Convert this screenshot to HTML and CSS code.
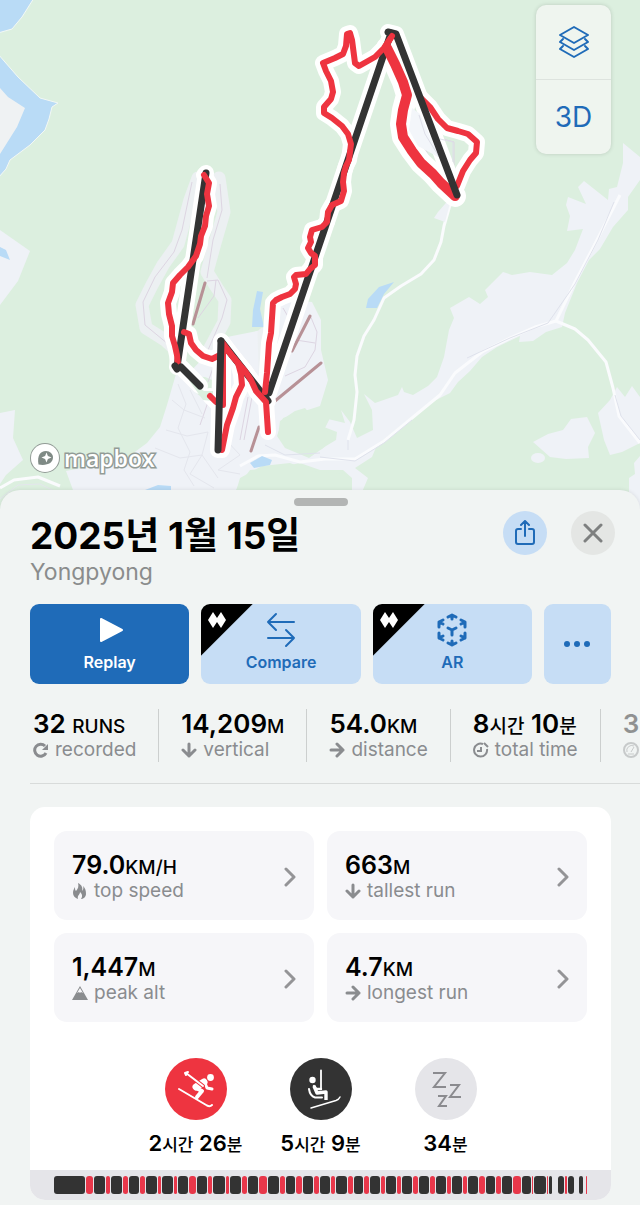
FILE: index.html
```html
<!DOCTYPE html>
<html lang="ko">
<head>
    <meta charset="UTF-8">
    <meta name="viewport" content="width=device-width, initial-scale=1.0">
    <title>Yongpyong</title>
    <link rel="stylesheet" href="styles.css">
</head>
<body>

    <div class="map">
        <svg class="map-canvas" viewBox="0 0 640 512" preserveAspectRatio="xMidYMin slice" aria-hidden="true">
            <defs>
                <g id="lifts">
                    <path d="M206 173L177 367M181 367L200 386M221 341L218 450M221 341L268 401M391 33L269 393M388 32L396 34L457 195"/>
                </g>
                <g id="runs">
                    <path d="M204 175L209 183L207 194L209 206L206 216L205 226L201 236L200 244L196 256L188 267L180 275L173 283L172 292L168 303L169 314L172 326L172 336L175 346L177 355L178 365"/>
                    <path d="M184 332L189 334L191 343L196 350L203 356L212 359L220 355"/>
                    <path d="M222 342L233 357L245 371L251 380L256 391L266 402L268 432"/>
                    <path d="M224 346L238 363L241 374L242 385L236 397L233 408L227 425L222 450"/>
                    <path d="M223 350L223 405M210 396L216 402"/>
                    <path d="M265 392L267 373L268 358L269 343L271 333L272 318L273 303L276 300L282 297L290 294L295 289L296 284L294 277L296 275L306 274L310 269L315 265L315 256L311 253L308 248L311 242L310 237L312 230L322 227L327 222L328 212L332 205L341 201L344 191L343 182L344 173L346 166L349 160L351 144L348 134L342 126L332 118L324 113L324 107L331 99L333 92L331 81L326 71L323 63L335 58L343 54L346 46L347 34L350 33L352 40L355 63L359 66L375 57L384 48L392 36"/>
                    <path d="M420 97L430 107L438 119L447 128L458 131L468 134L477 142L476 153L470 160L463 171L457 186"/>
                </g>
                <path id="wide-run" d="M387 48L395 64L403 82L407 95L403 110L401 124L403 137L412 151L421 163L433 174L441 183L455 196"/>
            </defs>

            <rect width="640" height="512" fill="#dcefdf"/>

            <!-- water and villages on the left edge -->
            <g fill="#b9dbf6" stroke="#f3f8f5" stroke-width="1">
                <path d="M-2 -2H34L22 17L12 29L-2 33Z"/>
                <path d="M-2 54L18 77L40 98L58 103L52 107L49 119L45 130L30 145L10 160L6 169L-2 178Z"/>
            </g>
            <path d="M0 88L8 97L25 108L17 127L0 154Z" fill="#eff2f3"/>
            <g fill="#eff2f7">
                <path d="M0 230L30 251L18 281L0 305Z"/>
                <path d="M0 413L15 410L13 438L23 460L6 475L0 484Z"/>
                <path d="M176 374L167 405L160 427L147 443L128 457L76 469L66 471L73 490V512H225L238 486L250 470L276 468L300 463L320 470L343 470L352 478V492H362L368 478L355 468L372 457L377 445L404 423L430 403L450 393L458 382L470 371L482 357L497 347L520 336L519 342L533 341L546 332L562 327L565 313L577 283L589 260L600 249L613 227L628 210V197L640 180V157L623 143V163L617 187L609 189L608 200L584 181L578 187L586 204L568 197L566 205L570 216L567 231L583 229L575 250L567 263L552 275L530 272L512 275L503 272L492 283L485 290L488 297L480 304L469 297L450 308L454 318L449 330L444 357L437 377L428 386L413 395L404 392L402 387L398 395L375 403L364 394L372 410L373 430L357 438L350 422L341 410L345 423L328 419L324 427L337 432L336 440L326 446L309 458L285 448L277 436L283 418L320 406L328 380L321 350L321 320L312 302L290 300L262 330L222 338L190 372Z"/>
                <path d="M598 413L610 400L617 387L625 397L632 386L640 397V443L622 452L610 455L604 440Z"/>
                <path d="M533 442L548 434L563 430L571 419L587 417L595 433L588 447L589 458L566 459L550 457Z"/>
                <ellipse cx="538" cy="458" rx="7" ry="5"/>
                <path d="M640 456L634 463L635 474L629 478V512H640Z"/>
            </g>
            <g fill="#dcefdf">
                <path d="M280 421L295 411L305 408L310 414L330 418L324 430L334 436L322 449L302 452L286 447L278 436Z"/>
                <path d="M205 377L217 382L212 405L196 393L188 376Z"/>
                <path d="M240 478L262 466L290 463L310 471L345 474L350 480V512H230Z"/>
                <path d="M0 488L20 475L50 478L72 492V512H0Z"/>
            </g>

            <!-- ski areas and slope outlines -->
            <g fill="none" stroke="#ecf0f2" stroke-width="13" stroke-linejoin="round" stroke-linecap="round">
                <path d="M198 178L190 200L184 222L178 244L163 265L152 285L142 305L146 328L165 340L178 352"/>
                <path d="M219 178L224 212L215 243L207 272L217 288L225 300L224 322L210 348"/>
                <path d="M264 334L266 398"/>
            </g>
            <path d="M275 302L306 300L318 330L320 375L296 398L270 394Z" fill="#eff2f7"/>
            <g fill="none" stroke="#ddd5e2" stroke-width="1">
                <path d="M192 182L182 230L174 252L155 277L143 302L145 325L168 344"/>
                <path d="M220 184L222 210L213 240L207 278M216 280L214 296L198 318M207 281L218 280L227 300L222 318L208 350"/>
                <path d="M310 315L317 332L315 350L305 367L285 376M296 340L315 343M283 308L290 320M300 318L291 352"/>
                <path d="M248 397L240 440M252 397L244 440M196 376L208 402L200 425M214 365L208 382"/>
                <path d="M416 127L432 164M443 139L454 142V165"/>
            </g>
            <g fill="none" stroke="#e4e6ed" stroke-width="1">
                <path d="M178 384L186 404L178 428L190 452L184 470L194 486M172 400L184 410L205 418M166 430L187 436L208 432L202 455L218 478M190 390L202 414M155 448L180 458L202 455L190 474L214 488M226 440L240 455L218 470L240 474"/>
                <path d="M0 499L18 485L40 484L56 492"/>
            </g>

            <!-- roads -->
            <g fill="none" stroke="#fafbfd" stroke-width="3" stroke-linejoin="round">
                <path d="M452 198L444 226L441 242L434 260L421 274L401 286L384 298L374 320L364 336L357 356L355 375L357 392L354 420L348 440"/>
                <path d="M240 466L258 456L275 455L300 462L325 459L355 459L384 441L412 418L440 395L455 373L482 352L510 338L535 327L556 321L575 329L588 340L606 362L613 388L619 416L640 443"/>
                <path d="M556 321L575 282L598 238L620 195"/>
                <path d="M0 488L14 480L38 477L60 486"/>
            </g>
            <g fill="none" stroke="#dfe2ec" stroke-width="1">
                <path d="M320 457L355 461L384 443L412 420M467 358L510 338L548 323L575 284L598 240L614 202M615 395L621 416L640 440M265 445L285 455L320 453M348 440V450"/>
            </g>
            <path d="M452 196L438 212L434 218L445 222Z" fill="#eff2f7"/>

            <g fill="#b9dbf6">
                <path d="M257 291L263 292L260 309L264 327H252L253 310Z"/>
                <path d="M394 282L379 287L368 299L366 308H377L384 294Z"/>
                <path d="M250 463L262 456L272 460L270 465L254 468Z"/>
                <path d="M145 490L158 485L171 486V491Z"/>
                <path d="M0 247L6 250L10 260L0 256Z"/>
            </g>

            <g fill="none" stroke="#b79196" stroke-width="3" stroke-linecap="round">
                <path d="M205 283L193 324M310 316L292 351M321 363L275 401M259 427L251 451"/>
            </g>

            <!-- recorded tracks: white casing, runs in red, lifts in black -->
            <g class="track casing">
                <use href="#lifts"/>
                <use href="#runs"/>
                <use href="#wide-run" stroke-width="22"/>
            </g>
            <path d="M188 379L204 391L213 391L213 401L203 400Z" fill="#dcefdf"/>
            <path d="M412 108L420 114L440 158L418 146L409 130Z" fill="#f3f6fa"/>
            <path d="M419 115L425 134L441 160M440 139L453 142V162" fill="none" stroke="#dedfe9" stroke-width="1"/>
            <g class="track lift-line"><path d="M206 173L177 367M221 341L268 401M391 33L269 393"/></g>
            <g class="track run-line">
                <use href="#runs"/>
                <use href="#wide-run" stroke-width="10"/>
            </g>
            <g class="track lift-line"><path d="M177 369L175 366M181 367L200 386M221 341L218 450M388 32L396 34L457 195"/></g>
            <g class="track run-line"><path d="M384 49L392 36"/></g>
        </svg>

        <div class="map-controls">
            <button type="button" aria-label="Map layers">
                <svg width="32" height="34" viewBox="0 0 32 34" fill="none" stroke="currentColor" stroke-width="2" stroke-linejoin="round" stroke-linecap="round">
                    <path d="M16 2L30 10L16 18L2 10Z"/>
                    <path d="M5 14L2 17L16 25L30 17L27 14"/>
                    <path d="M5 21L2 24L16 32L30 24L27 21"/>
                </svg>
            </button>
            <button type="button">3D</button>
        </div>

        <a class="mapbox" href="#">
            <svg width="30" height="30" viewBox="0 0 30 30" aria-hidden="true">
                <circle cx="15" cy="15" r="14" fill="#fff" stroke="#929b96" stroke-width="2"/>
                <path d="M8.500 21.500C7 13 10 8 16 8C20 8 23 11 23 14.500C23 20 17 23 8.500 21.500Z" fill="#7f8a85"/>
                <path d="M16.500 9.500L17.900 13.100L21.500 14.500L17.900 15.900L16.500 19.500L15.100 15.900L11.500 14.500L15.100 13.100Z" fill="#fff"/>
            </svg>
            <span>mapbox</span>
        </a>
    </div>

    <main class="sheet">
        <div class="grabber"></div>

        <header class="header">
            <div class="heading">
                <h1>2025년 1월 15일</h1>
                <p>Yongpyong</p>
            </div>
            <button type="button" class="round share" aria-label="Share">
                <svg width="22" height="26" viewBox="0 0 22 26" fill="none" stroke="currentColor" stroke-width="2" stroke-linecap="round" stroke-linejoin="round">
                    <path d="M7 9H4Q2 9 2 11V22Q2 24 4 24H18Q20 24 20 22V11Q20 9 18 9H15M11 16V2M7 5L11 1L15 5"/>
                </svg>
            </button>
            <button type="button" class="round close" aria-label="Close">
                <svg width="20" height="20" viewBox="0 0 20 20" fill="none" stroke="currentColor" stroke-width="3" stroke-linecap="round">
                    <path d="M2 2L18 18M18 2L2 18"/>
                </svg>
            </button>
        </header>

        <div class="actions">
            <button type="button" class="action primary">
                <svg width="36" height="36" viewBox="0 0 36 36" fill="currentColor" stroke="currentColor" stroke-width="2" stroke-linejoin="round">
                    <path d="M9 7V29L30 18Z"/>
                </svg>
                Replay
            </button>
            <button type="button" class="action pro">
                <svg class="diamonds" width="18" height="18" viewBox="0 0 18 18" fill="#fff"><path d="M5 1L9 7L13 1L18 9L13 17L9 11L5 17L0 9Z"/></svg>
                <svg width="36" height="36" viewBox="0 0 36 36" fill="none" stroke="currentColor" stroke-width="2" stroke-linecap="round" stroke-linejoin="round">
                    <path d="M31 10H5M13 2L5 10L13 18M5 26H31M23 18L31 26L23 34"/>
                </svg>
                Compare
            </button>
            <button type="button" class="action pro">
                <svg class="diamonds" width="18" height="18" viewBox="0 0 18 18" fill="#fff"><path d="M5 1L9 7L13 1L18 9L13 17L9 11L5 17L0 9Z"/></svg>
                <svg width="36" height="36" viewBox="0 0 36 36" fill="none" stroke="currentColor" stroke-width="3" stroke-linecap="round" stroke-linejoin="round">
                    <path d="M18 18V23M18 18L14 16M18 18L22 16"/>
                    <path d="M14 5L18 3L22 5M18 3V7"/>
                    <path d="M14 31L18 33L22 31M18 33V29"/>
                    <path d="M9 8L5 10V15M5 10L9 12"/>
                    <path d="M27 8L31 10V15M31 10L27 12"/>
                    <path d="M9 28L5 26V21M5 26L9 24"/>
                    <path d="M27 28L31 26V21M31 26L27 24"/>
                </svg>
                AR
            </button>
            <button type="button" class="action more" aria-label="More">
                <svg width="28" height="8" viewBox="0 0 28 8" fill="currentColor">
                    <circle cx="4" cy="4" r="3"/><circle cx="14" cy="4" r="3"/><circle cx="24" cy="4" r="3"/>
                </svg>
            </button>
        </div>

        <div class="stats">
            <div class="stat">
                <div class="value">32 <small>RUNS</small></div>
                <div class="label">
                    <svg width="16" height="16" viewBox="0 0 16 16" fill="none" stroke="currentColor" stroke-width="3"><path d="M13 11A6 6 0 1 1 12 4"/><path d="M15 2V8H9Z" fill="currentColor" stroke="none"/></svg>
                    recorded
                </div>
            </div>
            <div class="stat">
                <div class="value">14,209<small>M</small></div>
                <div class="label">
                    <svg class="bold-line" width="16" height="16" viewBox="0 0 16 16"><path d="M8 2V14M2 8L8 14L14 8"/></svg>
                    vertical
                </div>
            </div>
            <div class="stat">
                <div class="value">54.0<small>KM</small></div>
                <div class="label">
                    <svg class="bold-line" width="16" height="16" viewBox="0 0 16 16"><path d="M2 8H14M8 2L14 8L8 14"/></svg>
                    distance
                </div>
            </div>
            <div class="stat">
                <div class="value">8<small>시간</small> 10<small>분</small></div>
                <div class="label">
                    <svg width="16" height="16" viewBox="0 0 16 16" fill="none" stroke="currentColor" stroke-width="2"><path d="M10 2A6.500 6.500 0 1 0 14 7M8 5V9H4M11 1L15 5"/></svg>
                    total time
                </div>
            </div>
            <div class="stat faded">
                <div class="value">3</div>
                <div class="label">
                    <svg width="16" height="16" viewBox="0 0 16 16" fill="none" stroke="currentColor" stroke-width="2"><circle cx="8" cy="8" r="7"/><path d="M4 10A5 5 0 0 1 11 4M8 10L11 5M5 12H11" stroke-width="1"/></svg>
                </div>
            </div>
        </div>

        <section class="card">
            <div class="tiles">
                <a class="tile" href="#">
                    <div>
                        <div class="value">79.0<small>KM/H</small></div>
                        <div class="label">
                            <svg width="16" height="16" viewBox="0 0 16 16" fill="currentColor"><path d="M6 0C10 2 11 5 10 8C11 7 12 5 11 3C14 6 14 9 14 11C14 14 11 16 9 16C11 13 10 11 8 9C8 12 5 12 6 16C3 15 1 13 1 10C1 7 2 6 3 4C3 6 3 7 4 8C6 6 7 3 6 0Z"/></svg>
                            top speed
                        </div>
                    </div>
                    <svg class="chevron" width="12" height="20" viewBox="0 0 12 20"><path d="M2 2L10 10L2 18"/></svg>
                </a>
                <a class="tile" href="#">
                    <div>
                        <div class="value">663<small>M</small></div>
                        <div class="label">
                            <svg class="bold-line" width="16" height="16" viewBox="0 0 16 16"><path d="M8 2V14M2 8L8 14L14 8"/></svg>
                            tallest run
                        </div>
                    </div>
                    <svg class="chevron" width="12" height="20" viewBox="0 0 12 20"><path d="M2 2L10 10L2 18"/></svg>
                </a>
                <a class="tile" href="#">
                    <div>
                        <div class="value">1,447<small>M</small></div>
                        <div class="label">
                            <svg width="16" height="16" viewBox="0 0 16 16" fill="currentColor"><path d="M8 1L16 15H0ZM8 3L5 8L7 7L8 8L9 7L11 8Z" fill-rule="evenodd"/></svg>
                            peak alt
                        </div>
                    </div>
                    <svg class="chevron" width="12" height="20" viewBox="0 0 12 20"><path d="M2 2L10 10L2 18"/></svg>
                </a>
                <a class="tile" href="#">
                    <div>
                        <div class="value">4.7<small>KM</small></div>
                        <div class="label">
                            <svg class="bold-line" width="16" height="16" viewBox="0 0 16 16"><path d="M2 8H14M8 2L14 8L8 14"/></svg>
                            longest run
                        </div>
                    </div>
                    <svg class="chevron" width="12" height="20" viewBox="0 0 12 20"><path d="M2 2L10 10L2 18"/></svg>
                </a>
            </div>

            <div class="times">
                <div class="time">
                    <svg width="62" height="62" viewBox="0 0 62 62" fill="none" stroke="#fff" stroke-linecap="round" stroke-linejoin="round">
                        <circle cx="31" cy="31" r="31" fill="#ee3440" stroke="none"/>
                        <circle cx="45.500" cy="19.500" r="3.400" fill="#fff" stroke="none"/>
                        <path d="M39 24L31 29" stroke-width="7"/>
                        <path d="M40 25L42 30L47 31" stroke-width="3"/>
                        <path d="M31 30L37 33L32 39" stroke-width="4"/>
                        <path d="M20 14L38 28" stroke="#ee3440" stroke-width="4"/>
                        <path d="M21 15L38 28M23 14L20 15L21 17" stroke-width="2"/>
                        <path d="M14 31L42 47.500Q45 49 47 47" stroke-width="2"/>
                    </svg>
                    <div class="duration">2<small>시간</small> 26<small>분</small></div>
                </div>
                <div class="time">
                    <svg width="62" height="62" viewBox="0 0 62 62" fill="none" stroke="#fff" stroke-linecap="round" stroke-linejoin="round">
                        <circle cx="31" cy="31" r="31" fill="#333" stroke="none"/>
                        <circle cx="22.500" cy="22" r="3.200" fill="#fff" stroke="none"/>
                        <path d="M31 12.500V31" stroke-width="1.800"/>
                        <path d="M24 28L27 35L36 34V42" stroke-width="3.400" stroke-linecap="butt"/>
                        <path d="M24 28L26 31H31" stroke-width="2.400"/>
                        <path d="M19 31Q20 38 25 39.500H32" stroke-width="2"/>
                        <path d="M21 50L46 42.500Q49 41.500 50 39" stroke-width="1.400"/>
                    </svg>
                    <div class="duration">5<small>시간</small> 9<small>분</small></div>
                </div>
                <div class="time">
                    <svg width="62" height="62" viewBox="0 0 62 62" fill="none" stroke="#8b8b8f" stroke-width="2">
                        <circle cx="31" cy="31" r="31" fill="#e5e5e9" stroke="none"/>
                        <path d="M18 15H30L19 29H31M35 27H44L35 39H46M23 38H31L24 48H32"/>
                    </svg>
                    <div class="duration">34<small>분</small></div>
                </div>
            </div>

            <div class="timeline" id="timeline"></div>
        </section>
    </main>

    <script src="script.js"></script>
</body>
</html>
```

FILE: styles.css
```css
* {
    box-sizing: border-box;
}

body {
    margin: 0;
    font-family: Inter, "Noto Sans CJK KR", sans-serif;
    background-color: #f1f4f3;
    color: #000;
    overflow-x: hidden;
}

button {
    font: inherit;
    border: none;
    padding: 0;
    cursor: pointer;
}

a {
    color: inherit;
    text-decoration: none;
}

h1, p {
    margin: 0;
}

svg {
    flex: none;
}

/* Map */
.map {
    position: relative;
    height: 512px;
    overflow: hidden;
    background-color: #dcefdf;
}

.map-canvas {
    display: block;
    width: 100%;
    height: 100%;
}

.track {
    fill: none;
    stroke-linecap: round;
    stroke-linejoin: round;
}

.casing {
    stroke: #fff;
    stroke-width: 16px;
}

.run-line {
    stroke: #ee3440;
    stroke-width: 6px;
}

.lift-line {
    stroke: #333;
    stroke-width: 7px;
}

.map-controls {
    position: absolute;
    top: 5px;
    right: 29px;
    width: 75px;
    border-radius: 10px;
    background-color: #eff5ef;
    box-shadow: 0 0 4px rgba(0, 0, 0, 0.15);
}

.map-controls button {
    display: flex;
    align-items: center;
    justify-content: center;
    width: 100%;
    height: 74px;
    background: none;
    color: #1f6bb8;
    font-size: 28px;
}

.map-controls button + button {
    height: 75px;
    border-top: 1px solid #dde3de;
}

.mapbox {
    position: absolute;
    left: 30px;
    bottom: 38px;
    display: flex;
    align-items: center;
    gap: 4px;
    font-family: "Open Sans", sans-serif;
    font-size: 23px;
    line-height: 32px;
    font-weight: 600;
    color: #fff;
    -webkit-text-stroke: 3px #929b96;
    paint-order: stroke fill;
}

/* Sheet */
.sheet {
    position: relative;
    margin-top: -22px;
    padding: 8px 29px 5px 30px;
    border-radius: 20px 20px 0 0;
    background-color: #f1f4f3;
    box-shadow: 0 0 4px rgba(0, 0, 0, 0.1);
}

.grabber {
    width: 54px;
    height: 8px;
    margin: 0 auto;
    border-radius: 4px;
    background-color: #b3b5b4;
}

.header {
    display: flex;
    align-items: flex-start;
    margin: 5px -4px 0 0;
}

.heading {
    flex: 1;
}

h1 {
    font-size: 37px;
    line-height: 50px;
    font-weight: 700;
}

.heading p {
    font-size: 23px;
    line-height: 22px;
    color: #8a8c8c;
}

.round {
    display: flex;
    align-items: center;
    justify-content: center;
    width: 44px;
    height: 44px;
    border-radius: 50%;
}

.share {
    margin-right: 24px;
    background-color: #c6ddf5;
    color: #1f6bb8;
}

.close {
    background-color: #e4e6e4;
    color: #7e8080;
}

.actions {
    display: grid;
    grid-template-columns: 1fr 1fr 1fr 67px;
    gap: 12px;
    margin-top: 21px;
}

.action {
    position: relative;
    display: flex;
    flex-direction: column;
    align-items: center;
    justify-content: center;
    gap: 4px;
    height: 80px;
    padding-bottom: 4px;
    border-radius: 9px;
    overflow: hidden;
    background-color: #c6ddf5;
    color: #1f6bb8;
    font-size: 16px;
    line-height: 20px;
    font-weight: 600;
}

.primary {
    background-color: #1f6bb8;
    color: #fff;
}

.pro {
    background-image: linear-gradient(135deg, #000 36px, transparent 37px);
}

.more {
    padding-bottom: 0;
}

.diamonds {
    position: absolute;
    top: 7px;
    left: 7px;
}

.stats {
    display: flex;
    margin: 17px -29px 0 -30px;
    padding: 8px 0 8px 11px;
    overflow: hidden;
}

.stat {
    flex: none;
    padding: 0 22px;
    border-right: 1px solid #cccfce;
}

.faded {
    border-right: none;
    opacity: 0.4;
}

.value {
    font-size: 25px;
    line-height: 28px;
    font-weight: 600;
    white-space: nowrap;
}

.stat .value {
    font-size: 26px;
    line-height: 29px;
}

.value small {
    font-size: 19px;
    line-height: 1;
}

.label {
    display: flex;
    align-items: center;
    gap: 6px;
    height: 24px;
    font-size: 19px;
    line-height: 24px;
    color: #8a8c8f;
    white-space: nowrap;
}

.bold-line {
    fill: none;
    stroke: currentColor;
    stroke-width: 3px;
    stroke-linecap: round;
    stroke-linejoin: round;
}

/* Card */
.card {
    position: relative;
    margin-top: 37px;
    border-radius: 15px;
    background-color: #fff;
}

.card::before {
    content: "";
    position: absolute;
    top: -24px;
    left: 0;
    right: -29px;
    height: 1px;
    background-color: #d8dbda;
}

.tiles {
    display: grid;
    grid-template-columns: 1fr 1fr;
    gap: 13px;
    padding: 24px 24px 36px;
}

.tile {
    display: flex;
    align-items: center;
    justify-content: space-between;
    height: 89px;
    padding: 2px 18px 0;
    border-radius: 13px;
    background-color: #f6f6f9;
}

.chevron {
    fill: none;
    stroke: #949497;
    stroke-width: 3px;
    stroke-linecap: round;
    stroke-linejoin: round;
}

.times {
    display: flex;
    justify-content: center;
}

.time {
    width: 125px;
    display: flex;
    flex-direction: column;
    align-items: center;
    gap: 9px;
}

.duration {
    font-size: 22px;
    line-height: 28px;
    font-weight: 600;
    white-space: nowrap;
}

.duration small {
    font-size: 17px;
    line-height: 1;
}

.value small,
.duration small {
    font-weight: 500;
}

.timeline {
    display: flex;
    gap: 1px;
    height: 30px;
    margin-top: 13px;
    padding: 6px 24px;
    border-radius: 0 0 15px 15px;
    background-color: #e5e5e9;
}

.segment {
    flex-basis: 0;
    border-radius: 3px;
}

.segment.lift {
    background-color: #333;
}

.segment.run {
    background-color: #e8374a;
}
```

FILE: script.js
```js
// Length of each part of the day: L = lift, R = run, - = pause
const segments = "L88 R21 L29 R11 L32 R15 L29 R13 L31 R10 L30 R9 L29 R18 L29 R11 L33 R11 L29 R14 L29 R24 L30 R13 L28 R15 L30 R12 L29 R13 L29 R15 L27 R13 L28 R11 L28 R12 L28 R15 L27 R14 L30 R10 L28 R13 L28 R16 L27 R14 L28 R23 L24 R4 L33 R4 L9 -12 L16 R5 L17 -8 L12 -2 R4";

const names = { L: "lift", R: "run", "-": "pause" };
const timeline = document.getElementById("timeline");

segments.split(" ").forEach(item => {
    const el = document.createElement("span");
    el.className = "segment " + names[item[0]];
    el.style.flexGrow = item.slice(1);
    timeline.appendChild(el);
});
```
